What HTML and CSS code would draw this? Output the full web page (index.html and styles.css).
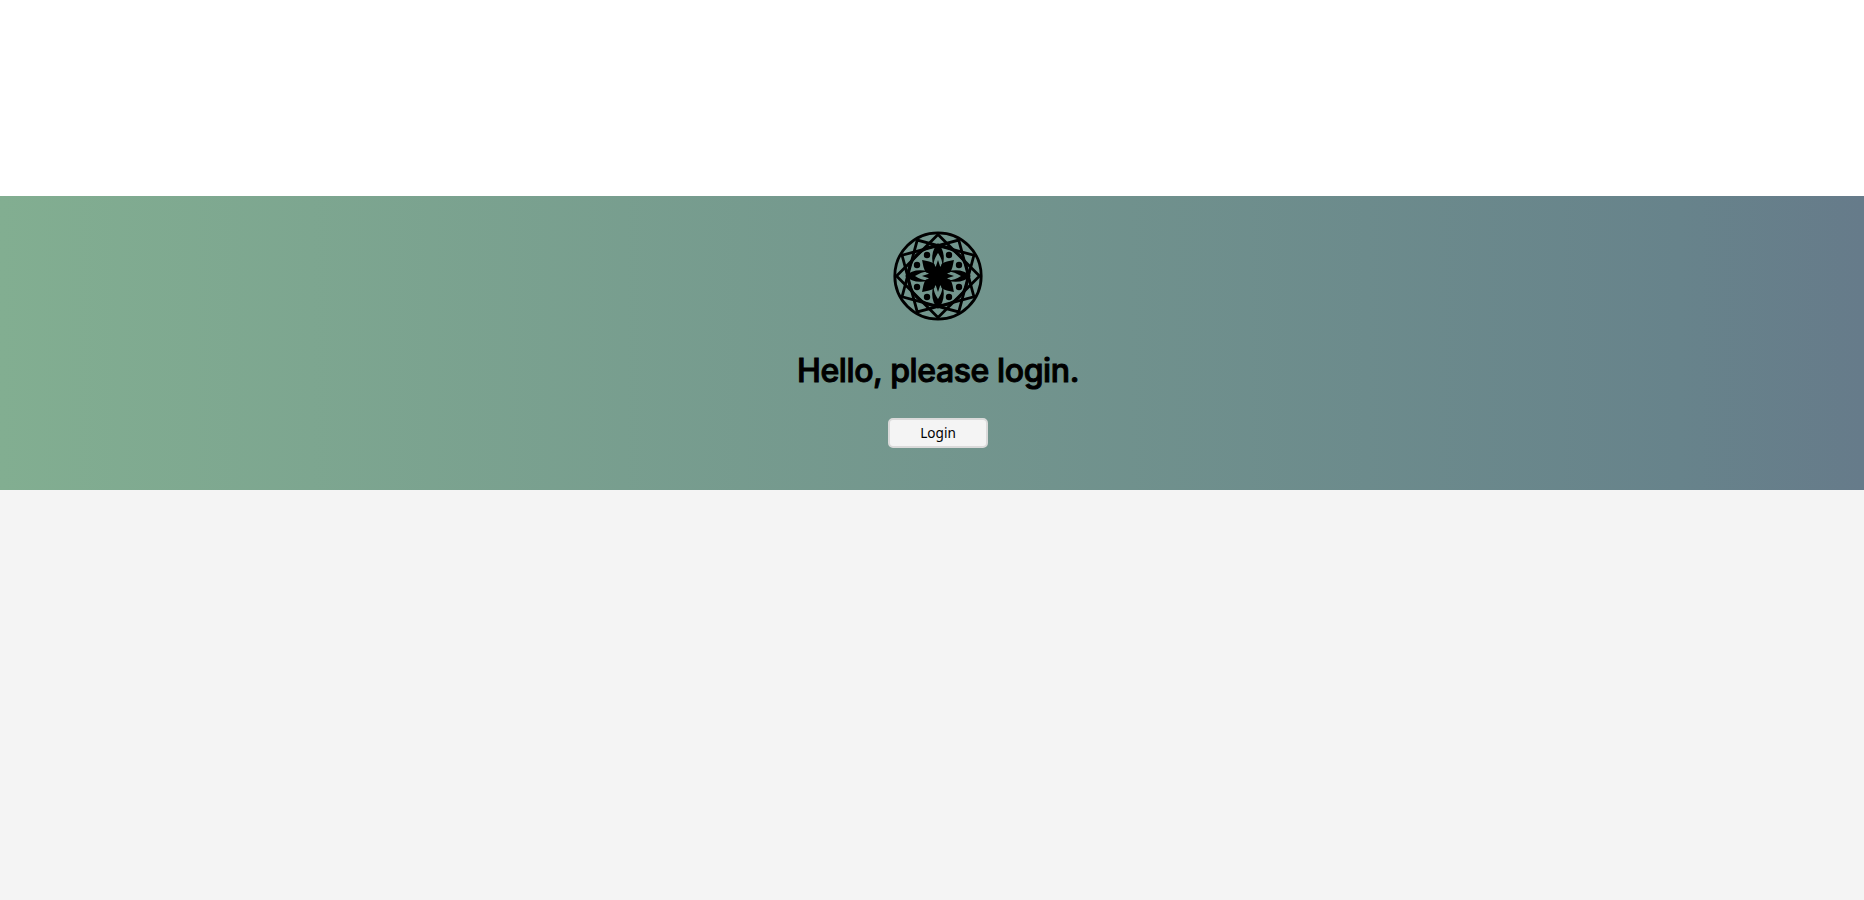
FILE: index.html
```html
<!DOCTYPE html>
<html lang="en">
<head>
<meta charset="utf-8">
<title>Login</title>
<link rel="stylesheet" href="styles.css">
</head>
<body>
<main class="banner">
<svg class="logo" viewBox="-45 -45 90 90" aria-hidden="true">
  <defs>
    <path id="square" d="M0-41.5 41.5 0 0 41.5-41.5 0Z"/>
    <path id="petal" fill-rule="evenodd" d="M0-33C-7.5-25-8-12 0 0C8-12 7.5-25 0-33ZM0-23C-4-17-5-12-4-8L-2-10L0-16L2-10L4-8C5-12 4-17 0-23Z"/>
    <path id="leaf" d="M0-22.5C-3-18-5.5-15-6-11L0 0L6-11C5.5-15 3-18 0-22.5Z"/>
    <g id="dots"><circle cx="-11" cy="-21" r="3.2"/><circle cx="11" cy="-21" r="3.2"/></g>
  </defs>
  <g class="lines">
    <circle r="43.2"/><circle r="30"/>
    <use href="#square"/><use href="#square" transform="rotate(30)"/><use href="#square" transform="rotate(60)"/>
  </g>
  <use href="#leaf" transform="rotate(45)"/><use href="#leaf" transform="rotate(135)"/><use href="#leaf" transform="rotate(225)"/><use href="#leaf" transform="rotate(315)"/>
  <use href="#petal"/><use href="#petal" transform="rotate(90)"/><use href="#petal" transform="rotate(180)"/><use href="#petal" transform="rotate(270)"/>
  <circle r="9"/>
  <use href="#dots"/><use href="#dots" transform="rotate(90)"/><use href="#dots" transform="rotate(180)"/><use href="#dots" transform="rotate(270)"/>
</svg>
<h1 class="title">Hello, please login.</h1>
<button class="login" type="button">Login</button>
</main>
</body>
</html>
```
FILE: styles.css
```css
html { background: #f4f4f4; }
body { margin: 0; border-top: 196px solid #fff; font-family: Inter, sans-serif; }
.banner {
  box-sizing: border-box;
  height: 294px;
  padding: 35px 0 0 12px;
  display: flex;
  flex-direction: column;
  align-items: center;
  background: linear-gradient(90deg, #82ae91 0%, #67838b 90%, #667b8a 100%);
}
.logo { width: 90px; height: 90px; flex: none; }
.lines { fill: none; stroke: #000; stroke-width: 2.8; }
.title {
  margin: 25px 0 0;
  height: 50px;
  font-size: 32px;
  line-height: 50px;
  font-weight: 500;
  letter-spacing: -0.4px;
  white-space: nowrap;
  -webkit-text-stroke: 1px #000;
  stroke-linejoin: round;
}
.login {
  box-sizing: border-box;
  width: 100px;
  height: 30px;
  margin-top: 22px;
  padding: 0;
  border: 2px solid #dadada;
  border-radius: 5px;
  background: #f4f4f4;
  color: #000;
  font: 13.6px/24px "Noto Sans", sans-serif;
}
```
